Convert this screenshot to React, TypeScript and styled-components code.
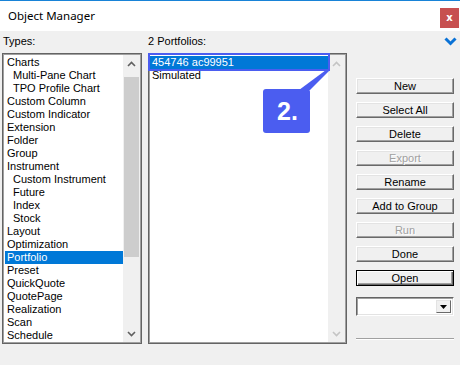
import React from "react";
import styled, { createGlobalStyle } from "styled-components";

const Global = createGlobalStyle`
  html, body { margin: 0; padding: 0; background: #f0f0f0; }
  body { font-family: "Liberation Sans", Arial, sans-serif; font-size: 11px; color: #000; }
`;

const Window = styled.div`
  width: 460px;
  height: 365px;
  box-sizing: border-box;
  border-top: 1px solid #1883d7;
  background: #f0f0f0;
  display: flex;
  flex-direction: column;
  overflow: hidden;
`;

const TitleBar = styled.div`
  height: 30px;
  flex: none;
  background: #fff;
  display: flex;
  justify-content: space-between;
  align-items: flex-start;
  padding: 0 1px 0 8px;
`;

const Title = styled.div`
  font-family: "Noto Sans", "Open Sans", sans-serif;
  font-size: 11.5px;
  line-height: 30px;
  color: #000;
`;

const CloseButton = styled.div`
  margin-top: 7px;
  width: 19px;
  height: 20px;
  background: #c75050;
  color: #fff;
  font-family: "DejaVu Sans", sans-serif;
  font-weight: bold;
  font-size: 10px;
  display: flex;
  align-items: center;
  justify-content: center;
  padding-bottom: 1px;
  box-sizing: border-box;
`;

const Body = styled.div`
  flex: 1;
  display: flex;
  padding-left: 2px;
`;

const Column = styled.div<{ $width: number; $gap: number }>`
  width: ${(p) => p.$width}px;
  margin-left: ${(p) => p.$gap}px;
  display: flex;
  flex-direction: column;
  position: relative;
`;

const Label = styled.div<{ $indent: number }>`
  height: 22px;
  box-sizing: border-box;
  padding-top: 4px;
  padding-left: ${(p) => p.$indent}px;
  line-height: 13px;
`;

const ListBox = styled.div`
  height: 291px;
  box-sizing: border-box;
  border: 1px solid #646464;
  box-shadow: inset 1px 1px 0 #a0a0a0, inset -1px -1px 0 #a0a0a0;
  padding: 1px;
  background: #fff;
  display: flex;
`;

const Items = styled.div<{ $pad: number }>`
  flex: 1;
  padding: 1px 0 0 ${(p) => p.$pad}px;
  overflow: hidden;
`;

const Item = styled.div<{ $level: number; $selected?: boolean }>`
  height: 13px;
  line-height: 13px;
  white-space: nowrap;
  padding-left: ${(p) => 2 + p.$level * 6}px;
  background: ${(p) => (p.$selected ? "#0078d7" : "transparent")};
  color: ${(p) => (p.$selected ? "#fff" : "#000")};
`;

const ScrollBar = styled.div`
  width: 17px;
  flex: none;
  background: #f0f0f0;
  display: flex;
  flex-direction: column;
`;

const ArrowBtn = styled.div`
  height: 17px;
  flex: none;
  display: flex;
  align-items: center;
  justify-content: center;
`;

const Track = styled.div`
  flex: 1;
  display: flex;
  flex-direction: column;
`;

const Thumb = styled.div<{ $offset: number; $size: number }>`
  margin-top: ${(p) => p.$offset}px;
  height: ${(p) => p.$size}px;
  margin-left: 1px;
  margin-right: 1px;
  background: #cdcdcd;
`;

const RightHeader = styled.div`
  height: 47px;
  display: flex;
  justify-content: flex-end;
  padding-top: 6px;
  box-sizing: border-box;
  margin-right: -3px;
`;

const ButtonStack = styled.div`
  display: flex;
  flex-direction: column;
  gap: 8px;
`;

const Button = styled.div<{ $disabled?: boolean; $default?: boolean }>`
  height: 16px;
  box-sizing: border-box;
  background: #f0f0f0;
  border: 1px solid;
  border-color: ${(p) => (p.$default ? "#000" : "#fff #696969 #696969 #fff")};
  box-shadow: ${(p) =>
    p.$default
      ? "inset 1px 1px 0 #fff, inset -1px -1px 0 #696969, inset -2px -2px 0 #a0a0a0"
      : "inset -1px -1px 0 #a0a0a0, inset 1px 1px 0 #e3e3e3"};
  display: flex;
  align-items: center;
  justify-content: center;
  line-height: 13px;
  color: ${(p) => (p.$disabled ? "#a0a0a0" : "#000")};
  text-shadow: ${(p) => (p.$disabled ? "1px 1px 0 #fff" : "none")};
`;

const Combo = styled.div`
  margin-top: 11px;
  height: 19px;
  box-sizing: border-box;
  background: #fff;
  border: 1px solid;
  border-color: #646464 #fff #fff #646464;
  box-shadow: inset 1px 1px 0 #a0a0a0, inset -1px -1px 0 #e3e3e3;
  display: flex;
  justify-content: flex-end;
  padding: 2px 2px 2px 0;
`;

const ComboButton = styled.div`
  width: 15px;
  height: 100%;
  box-sizing: border-box;
  background: #f0f0f0;
  border: 1px solid;
  border-color: #e3e3e3 #696969 #696969 #e3e3e3;
  display: flex;
  align-items: center;
  justify-content: center;
`;

const Separator = styled.div`
  margin-top: 22px;
  border-top: 1px solid #a0a0a0;
  border-bottom: 1px solid #fff;
`;

const Highlight = styled.div`
  position: absolute;
  left: 0;
  top: 22px;
  width: 182px;
  height: 18px;
  box-sizing: border-box;
  border: 2px solid #4b5df0;
  pointer-events: none;
`;

const Pointer = styled.svg`
  position: absolute;
  left: 0;
  top: 0;
  overflow: visible;
  pointer-events: none;
`;

const Callout = styled.div`
  position: absolute;
  left: 115px;
  top: 58px;
  width: 47px;
  height: 44px;
  border-radius: 3px;
  background: #4b5df0;
  color: #fff;
  font-family: "Liberation Sans", Arial, sans-serif;
  font-weight: bold;
  font-size: 25px;
  display: flex;
  align-items: center;
  justify-content: center;
  padding-left: 2px;
  box-sizing: border-box;
`;

const Chevron = ({ dir, color }: { dir: "up" | "down"; color: string }) => (
  <svg width="9" height="6" viewBox="0 0 9 6">
    <polyline
      points={dir === "up" ? "1,5 4.5,1.5 8,5" : "1,1 4.5,4.5 8,1"}
      fill="none"
      stroke={color}
      strokeWidth="1.6"
    />
  </svg>
);

const types: [string, number][] = [
  ["Charts", 0],
  ["Multi-Pane Chart", 1],
  ["TPO Profile Chart", 1],
  ["Custom Column", 0],
  ["Custom Indicator", 0],
  ["Extension", 0],
  ["Folder", 0],
  ["Group", 0],
  ["Instrument", 0],
  ["Custom Instrument", 1],
  ["Future", 1],
  ["Index", 1],
  ["Stock", 1],
  ["Layout", 0],
  ["Optimization", 0],
  ["Portfolio", 0],
  ["Preset", 0],
  ["QuickQuote", 0],
  ["QuotePage", 0],
  ["Realization", 0],
  ["Scan", 0],
  ["Schedule", 0],
];

const buttons: { label: string; disabled?: boolean; isDefault?: boolean }[] = [
  { label: "New" },
  { label: "Select All" },
  { label: "Delete" },
  { label: "Export", disabled: true },
  { label: "Rename" },
  { label: "Add to Group" },
  { label: "Run", disabled: true },
  { label: "Done" },
  { label: "Open", isDefault: true },
];

export default function App() {
  return (
    <>
      <Global />
      <Window>
        <TitleBar>
          <Title>Object Manager</Title>
          <CloseButton>x</CloseButton>
        </TitleBar>
        <Body>
          <Column $width={140} $gap={0}>
            <Label $indent={1}>Types:</Label>
            <ListBox>
              <Items $pad={1}>
                {types.map(([name, level]) => (
                  <Item key={name} $level={level} $selected={name === "Portfolio"}>
                    {name}
                  </Item>
                ))}
              </Items>
              <ScrollBar>
                <ArrowBtn>
                  <Chevron dir="up" color="#606060" />
                </ArrowBtn>
                <Track>
                  <Thumb $offset={5} $size={180} />
                </Track>
                <ArrowBtn>
                  <Chevron dir="down" color="#606060" />
                </ArrowBtn>
              </ScrollBar>
            </ListBox>
          </Column>
          <Column $width={199} $gap={6}>
            <Label $indent={0}>2 Portfolios:</Label>
            <ListBox>
              <Items $pad={0}>
                <Item $level={0} $selected>
                  454746 ac99951
                </Item>
                <Item $level={0}>Simulated</Item>
              </Items>
              <ScrollBar>
                <ArrowBtn>
                  <Chevron dir="up" color="#c4c4c4" />
                </ArrowBtn>
                <Track />
                <ArrowBtn>
                  <Chevron dir="down" color="#c4c4c4" />
                </ArrowBtn>
              </ScrollBar>
            </ListBox>
            <Highlight />
            <Pointer width="199" height="110">
              <polygon points="151,59 162,59 182,39 178,39" fill="#4b5df0" />
            </Pointer>
            <Callout>2.</Callout>
          </Column>
          <Column $width={98} $gap={9}>
            <RightHeader>
              <svg width="13" height="9" viewBox="0 0 13 9">
                <polyline
                  points="1.5,1.5 6.5,6.5 11.5,1.5"
                  fill="none"
                  stroke="#0a72d6"
                  strokeWidth="3"
                />
              </svg>
            </RightHeader>
            <ButtonStack>
              {buttons.map((b) => (
                <Button key={b.label} $disabled={b.disabled} $default={b.isDefault}>
                  {b.label}
                </Button>
              ))}
            </ButtonStack>
            <Combo>
              <ComboButton>
                <svg width="7" height="4" viewBox="0 0 7 4">
                  <polygon points="0,0 7,0 3.5,4" fill="#000" />
                </svg>
              </ComboButton>
            </Combo>
            <Separator />
          </Column>
        </Body>
      </Window>
    </>
  );
}
